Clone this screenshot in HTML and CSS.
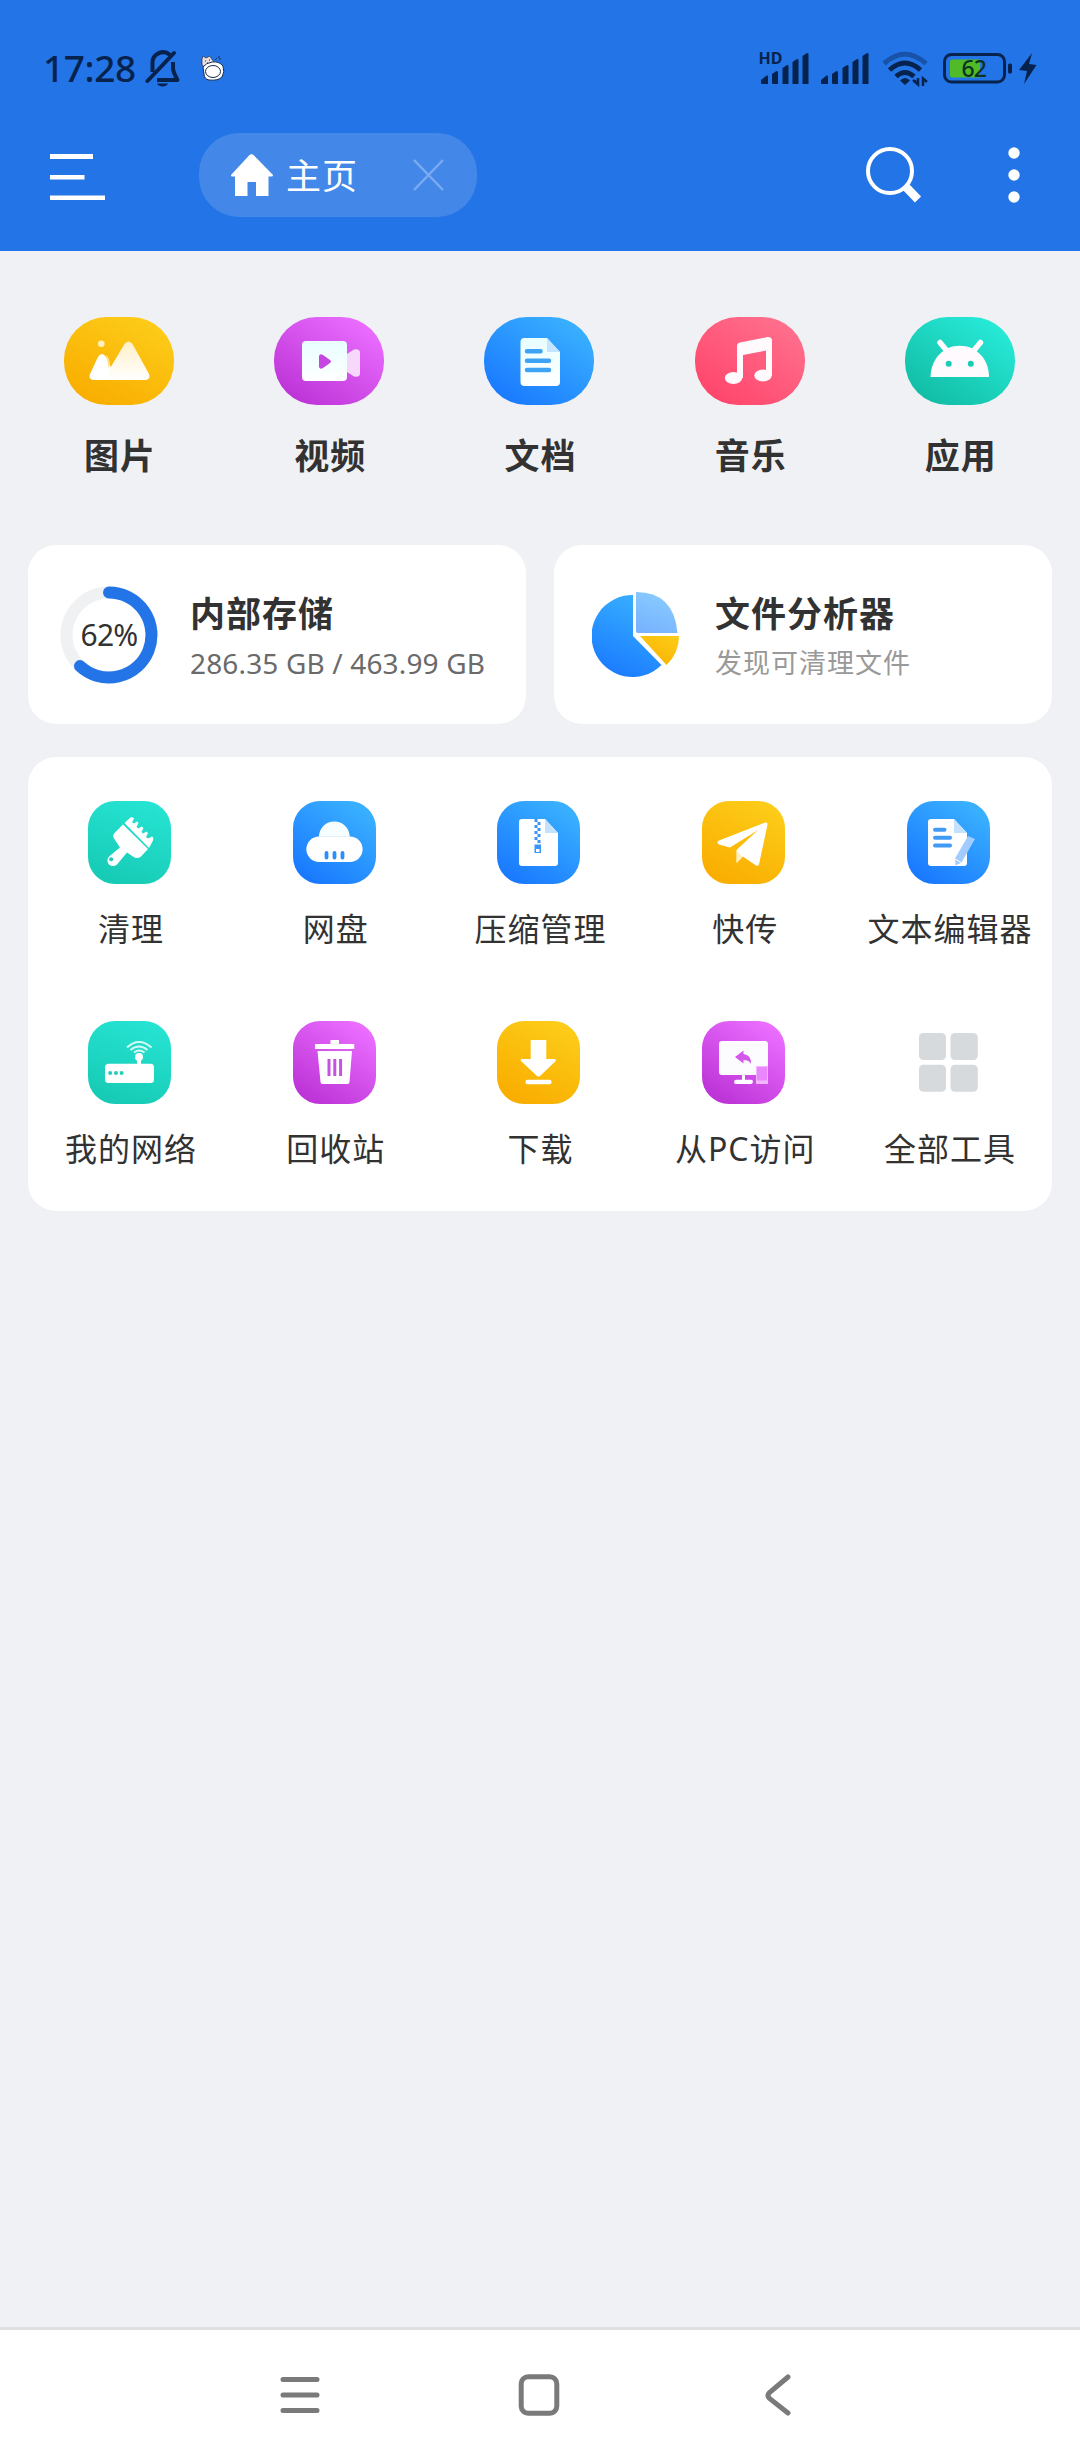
FILE: index.html
```html
<!DOCTYPE html>
<html lang="zh-CN">
<head>
<meta charset="utf-8">
<title>文件管理器</title>
<link rel="stylesheet" href="styles.css">
</head>
<body>
<svg width="0" height="0" class="defs" aria-hidden="true">
  <defs>
    <linearGradient id="peak" x1="0" y1="0" x2="0" y2="1"><stop offset="0" stop-color="#fff0c8"/><stop offset="1" stop-color="#fff"/></linearGradient>
    <linearGradient id="paper" x1="0" y1="0" x2="0" y2="1"><stop offset="0" stop-color="#e8feff"/><stop offset="1" stop-color="#fff"/></linearGradient>
    <linearGradient id="blue" x1=".7" y1="0" x2=".3" y2="1"><stop offset="0" stop-color="#38b0ff"/><stop offset="1" stop-color="#1a7aff"/></linearGradient>
    <linearGradient id="sky" x1=".7" y1="0" x2=".3" y2="1"><stop offset="0" stop-color="#8accff"/><stop offset="1" stop-color="#77b3ff"/></linearGradient>
    <linearGradient id="gold" x1=".8" y1="0" x2=".2" y2="1"><stop offset="0" stop-color="#fccb17"/><stop offset="1" stop-color="#f9b100"/></linearGradient>
  </defs>
</svg>

<header class="top">
  <div class="status">
    <span class="clock">17:28</span>
    <svg class="bell" width="36" height="38" viewBox="0 0 36 38" fill="none" stroke="#07234d" stroke-width="4" stroke-linejoin="round">
      <path d="M7.500 23V14.500A10.500 10.500 0 0 1 25 6"/><path d="M2.500 32 29 4" stroke-linecap="round"/>
      <path d="M28 13v6c0 4 2 7 4.500 12H12"/><path d="M12 34.500h11c-1.500 4-9.500 4-11 0z" fill="#07234d" stroke="none"/>
    </svg>
    <svg class="cat" width="24" height="26" viewBox="0 0 24 26" stroke="#172b4c" stroke-width="1">
      <path d="M1 4 2 1l3 2 4-2 1 2 3 4-2 5-6 1-4-3z" fill="#e9dfe3" stroke-width=".7"/><path d="M4 6h1M8 5h1M6 8h1M14 5l2-2M17 2h2M18 4h2" fill="none"/>
      <path d="M2 12q3-4 9-5 7-1 11 4 2 6-1 11-4 4-13 3-5-1-5-6z" fill="#fff"/><ellipse cx="12" cy="16.500" rx="7.500" ry="6" fill="#fff"/>
    </svg>
    <div class="indicators">
      <svg width="51" height="34" viewBox="0 0 51 34" fill="#07234d">
        <text x="-.5" y="13" class="hd">HD</text>
        <path d="M3 33q-1 0-1-1v-3l5.500-4.500q1.500-.5 1.500 1V33zM14 33q-1 0-1-1V23l4.500-3q1.500 0 1.500 1V33zM23.500 33V17l4.500-3q1.500 0 1.500 1V33zM33.500 33V11l4.500-3q1.500 0 1.500 1V33zM43.500 33V5l4.500-3q1.500 0 1.500 1V33z"/>
      </svg>
      <svg width="49" height="34" viewBox="2 0 49 34" fill="#07234d">
        <path d="M3 33q-1 0-1-1v-3l5.500-4.500q1.500-.5 1.500 1V33zM14 33q-1 0-1-1V23l4.500-3q1.500 0 1.500 1V33zM23.500 33V17l4.500-3q1.500 0 1.500 1V33zM33.500 33V11l4.500-3q1.500 0 1.500 1V33zM43.500 33V5l4.500-3q1.500 0 1.500 1V33z"/>
      </svg>
      <svg class="wifi" width="46" height="36" viewBox="0 0 46 36" fill="none" stroke="#07234d" stroke-width="5">
        <path d="M2 12.500Q23-6 44 12.500" opacity=".4"/><path d="M7.500 19q15.500-14 31 0"/><path d="M14 25.500q9-8 18 0"/>
        <path d="M18 29.500q5-5 10 0L23 34z" fill="#07234d" stroke="none"/><path d="M33 30v-1M31 29l5 4.500V27M45 31l-4-3.500V35" stroke-width="2.500"/>
      </svg>
      <svg width="70" height="32" viewBox="0 0 70 32">
        <rect x="1.500" y="1.500" width="60" height="27.500" rx="7" fill="none" stroke="#07234d" stroke-width="3"/>
        <path d="M9 6.500h28v18H9q-2 0-2-2v-14q0-2 2-2z" fill="#51ba27"/><rect x="65" y="10.500" width="4" height="10" rx="1.500" fill="#07234d"/>
        <text x="18.500" y="24" class="charge">62</text>
      </svg>
      <svg class="bolt" width="18" height="31" viewBox="0 0 18 31" fill="#07234d"><path d="M13 0 0 17l8 1-3 13L17.500 12 10 11z"/></svg>
    </div>
  </div>
  <div class="toolbar">
    <svg class="menu" width="55" height="48" viewBox="0 0 55 48" fill="#fff"><path d="M0 1h43v5H0zM0 22h34.500v4.500H0zM0 42.500h55V47H0z"/></svg>
    <div class="tab">
      <svg width="42" height="42" viewBox="0 0 42 42" fill="#fff"><path d="M18.500 1q2-1.500 4 0L42 21q0 1.500-1.500 1.500H37.500V42H25V28h-8.500v14H4V22.500H1Q0 22.500 0 21z"/></svg>
      <span>主页</span>
      <svg class="close" width="31" height="32" viewBox="0 0 31 32" fill="none" stroke="#7baaf1" stroke-width="2.500"><path d="m1 1 29 30M30 1 1 31"/></svg>
    </div>
    <svg class="search" width="56" height="56" viewBox="0 0 56 56" fill="none" stroke="#fff"><circle cx="24" cy="24" r="22" stroke-width="4"/><path d="m39 39 13 13.500" stroke-width="8.500"/></svg>
    <svg class="more" width="12" height="56" viewBox="0 0 12 56" fill="#fff"><circle cx="6" cy="6" r="5.700"/><circle cx="6" cy="28" r="5.700"/><circle cx="6" cy="50" r="5.700"/></svg>
  </div>
</header>

<main>
  <nav class="categories">
    <a><svg class="gold" viewBox="0 0 110 88"><circle cx="37.300" cy="26.700" r="3.300" fill="#fff0c0"/><path d="M34 40q4-6 8 0l11 23H29q-5-1-3-6z" fill="#fff"/><path d="M46 47q-1-7-4-9l3 14z" fill="#ffe28a"/><path d="M60.500 27q4-5 8 0L85 57q2 5-3 6H45V53z" fill="url(#peak)"/></svg><b>图片</b></a>
    <a><svg class="violet" viewBox="0 0 110 88"><path d="m73 37 7-4.500q6-1 6 3.500v20q0 5-6 3.500L73 55z" fill="#f6d9fa"/><rect x="28" y="24" width="45" height="40" rx="4" fill="url(#paper)"/><path d="M45 39q1-3 4-1l7 5q2 1.500 0 3l-7 5q-3 2-4-1z" fill="#c546e0"/></svg><b>视频</b></a>
    <a><svg class="blue" viewBox="0 0 110 88"><path d="M40.500 21H63l13 14v30q0 4-4 4H40.500q-4 0-4-4V25q0-4 4-4z" fill="url(#paper)"/><path d="M63 21v14h13z" fill="#c4e4ff"/><path d="M43 34.300h13.500M43 43.700h22M43 53h22" stroke="#3ea3f5" stroke-width="4.500" stroke-linecap="round"/></svg><b>文档</b></a>
    <a><svg class="rose" viewBox="0 0 110 88"><g fill="#fffbfd"><ellipse cx="38.500" cy="61" rx="8.700" ry="6"/><ellipse cx="68" cy="58.500" rx="8.700" ry="6"/><path d="M42 62V29q0-3 3-3.500L73 20q4 0 4 3.500V59h-6V33.500L48 38v23z"/></g></svg><b>音乐</b></a>
    <a><svg class="teal" viewBox="0 0 110 88"><path d="M25.500 60C26 42 38 28.700 54.700 28.700S84 42 84 60z" fill="#fffafe"/><path d="m35 25.500 7 8.500M75.500 25.500l-7 8.500" stroke="#fffafe" stroke-width="5.500" stroke-linecap="round"/><circle cx="43.700" cy="46.700" r="3" fill="#1bcbb7"/><circle cx="65.800" cy="46.700" r="3" fill="#1bcbb7"/></svg><b>应用</b></a>
  </nav>

  <section class="cards">
    <article class="card storage">
      <div class="ring">
        <svg width="98" height="98" viewBox="0 0 98 98" fill="none" stroke-width="12"><circle cx="49" cy="49" r="42.500" stroke="#f0f1f3"/><path d="M49 6.500a42.500 42.500 0 1 1-29 73.600" stroke="#2374e6" stroke-linecap="round"/></svg>
        <span>62%</span>
      </div>
      <div><h2>内部存储</h2><p class="size">286.35 GB / 463.99 GB</p></div>
    </article>
    <article class="card analyzer">
      <svg width="88" height="87" viewBox="0 0 88 87"><path d="M41 4v41l28.500 29A41 41 0 1 1 41 4z" fill="url(#blue)"/><path d="M44 1q38 0 41.500 41H46q-2 0-2-2z" fill="url(#sky)"/><path d="M48 45h39q0 17-12.500 29z" fill="url(#gold)"/></svg>
      <div><h2>文件分析器</h2><p>发现可清理文件</p></div>
    </article>
  </section>

  <section class="tools">
    <a><svg class="teal" viewBox="0 0 83 83"><path d="M35 23.500 60 48l-7 7.500q-4 3-8 0l-6-4-10 12q-4 3-8 0-3-4 0-8l11-9-6-9q-2-3 1-6z" fill="#fff"/><path d="m36.500 22 6-5.500q2-1 3.500 1l-2 4 2 1 3-2 1.500 1.500-2 4 2 1.500 3-2 2 1.500-2 4 1.500 1.500 3.500-2 1.500 1.500-2 4 2 1.500 4-2q2 1 1 4L61 47z" fill="#fff"/><circle cx="23.200" cy="58.200" r="2" fill="#19ccb6"/></svg><span>清理</span></a>
    <a><svg class="blue" viewBox="0 0 83 83"><path d="M25.800 37c0-22 31-22 31 0z" fill="#f7feff"/><rect x="13.400" y="35.500" width="56.200" height="25.500" rx="12.700" fill="#fff"/><path d="M26 35.500h30" stroke="#e2f2fa"/><path d="M33.500 52v4.500M41.500 52v4.500M49.500 52v4.500" stroke="#2b8ffb" stroke-width="3.800" stroke-linecap="round"/></svg><span>网盘</span></a>
    <a><svg class="blue" viewBox="0 0 83 83"><path d="M25 18h23l13 14v30q0 3-3 3H25q-3 0-3-3V21q0-3 3-3z" fill="#fff"/><path d="M48 18v14h13z" fill="#c4e2fe"/><path d="M39 18v24" stroke="#3a95f5" stroke-width="3" stroke-dasharray="3 3"/><path d="M42 21v21" stroke="#3a95f5" stroke-width="3" stroke-dasharray="3 3"/><path d="M37.500 43.500h6.500V52h-6.500z" fill="#3a95f5"/><path d="M39 48h3.500v3H39z" fill="#fff"/></svg><span>压缩管理</span></a>
    <a><svg class="gold" viewBox="0 0 83 83"><path d="M63.500 21.500q2.500 0 2 2L57 63.500q-1 2-3 1l-13-9-6.500 6.500V49L56 29 28 46.500l-11-3q-3-2 0-4z" fill="#fff"/><path d="M35 50v11.500l5.500-6z" fill="#ffefbd"/></svg><span>快传</span></a>
    <a><svg class="blue" viewBox="0 0 83 83"><path d="M24 18h23l13 14v30q0 3-3 3H24q-3 0-3-3V21q0-3 3-3z" fill="#fff"/><path d="M47 18v14h13z" fill="#c4e2fe"/><path d="M28 28.700h9.500M28 36.700h15M28 44.500h15" stroke="#409bf6" stroke-width="4" stroke-linecap="round"/><path d="m61 35 7 3-13.500 23.500-6 3-.5-7z" fill="#a2ccff"/><path d="m48 58 6 3.500" stroke="#fff"/></svg><span>文本编辑器</span></a>
    <a><svg class="teal" viewBox="0 0 83 83"><rect x="17" y="42.700" width="49" height="19.300" rx="3.500" fill="#fff"/><circle cx="51" cy="36" r="4" fill="#fff"/><path d="M51 37v8" stroke="#fff" stroke-width="4"/><g fill="#22cdbb"><circle cx="22.200" cy="52" r="2"/><circle cx="28" cy="52" r="2"/><circle cx="33.600" cy="52" r="2"/></g><path d="M39 26.500q12-11 24.500 0M42.500 29q8.500-7 17 0M46 31.500q5-4 10.500 0" fill="none" stroke="#d5faf5" stroke-width="2"/></svg><span>我的网络</span></a>
    <a><svg class="violet" viewBox="0 0 83 83"><path d="M22 23h15.500v-4H46v4h15.300v5H22zM24.500 30H59l-2.500 31q0 2-2 2h-25q-2 0-2-2z" fill="#fff"/><path d="M36 38v17M41.800 38v17M47.600 38v17" stroke="#c453df" stroke-width="3"/></svg><span>回收站</span></a>
    <a><svg class="gold" viewBox="0 0 83 83"><path d="M33.700 19h15.600v19h8q2 0 1.500 2L43 55q-1.500 1-3 0L24 40q-1-2 1-2h8.700z" fill="#fff"/><rect x="28.500" y="58.700" width="26" height="4.500" rx="2" fill="#fff"/></svg><span>下载</span></a>
    <a><svg class="violet" viewBox="0 0 83 83"><path d="M20 20h43q3 0 3 3v31H43v4.700h6q2 0 2 2t-2 2.300H34q-2 0-2-2t2-2.300h6V54H20q-3 0-3-3V23q0-3 3-3z" fill="#fcfcff"/><path d="M54 45h12v18H54z" fill="#f3b5fd"/><path d="M55 46h10v13.500H55z" fill="#ea87ff"/><path d="m33 36 8.500-6.500V33q8 1 7.500 10-2-4-7.500-4v3.500z" fill="#d458ec"/></svg><span>从PC访问</span></a>
    <a><svg class="plain" viewBox="0 0 83 83" fill="#d6dadd"><rect x="12" y="12" width="27" height="27" rx="4.500"/><rect x="43.500" y="12" width="27.300" height="27" rx="4.500"/><rect x="12" y="43.700" width="27" height="27" rx="4.500"/><rect x="43.500" y="43.700" width="27.300" height="27" rx="4.500"/></svg><span>全部工具</span></a>
  </section>
</main>

<footer class="navbar">
  <svg viewBox="0 0 42 42"><path d="M4 5.500h34M4 21h34M4 36.500h34"/></svg>
  <svg viewBox="0 0 42 42"><rect x="3.200" y="2.700" width="35.600" height="36.600" rx="7"/></svg>
  <svg viewBox="0 0 42 42"><path d="m36 3-18.500 15.500q-3 3 0 6L36 39"/></svg>
</footer>
</body>
</html>
```
FILE: styles.css
```css
* { box-sizing: border-box; margin: 0; padding: 0; }
body {
  width: 1080px;
  height: 2460px;
  display: flex;
  flex-direction: column;
  background: #f0f1f4;
  color: #323232;
  font-family: "Noto Sans", "Noto Sans CJK SC", sans-serif;
}
svg { display: block; flex: none; }
.defs { position: absolute; }
h2, p, b, span { white-space: nowrap; }

/* Header */
.top { height: 251px; background: #2374e6; }
.status { height: 133px; padding: 0 43px 0 43px; display: flex; align-items: flex-start; }
.clock { margin-top: 42px; width: 102px; font-size: 37px; line-height: 52px; font-weight: 500; letter-spacing: -.4px; color: #07234d; }
.bell { margin-top: 49px; }
.cat { margin: 55px 0 0 20px; }
.indicators { margin-left: auto; padding-top: 51px; display: flex; align-items: flex-start; }
.indicators svg { overflow: visible; }
.hd { font: 700 16px "Noto Sans", sans-serif; }
.charge { font: 500 23px "Noto Sans", sans-serif; fill: #0b3320; letter-spacing: -1px; }
.indicators svg:nth-child(2) { margin-left: 11px; }
.wifi { margin-left: 12px; }
.indicators svg:nth-child(4) { margin: 2px 6px 0 15px; }
.bolt { margin-top: 2px; }
.toolbar { height: 84px; padding: 0 60px 0 50px; display: flex; align-items: center; }
.menu { margin-top: 4px; }
.tab { width: 278px; height: 84px; margin-left: 94px; padding: 0 33px 0 32px; display: flex; align-items: center; border-radius: 40px; background: #4388e8; color: #fff; font-size: 35px; }
.tab span { margin: 1px auto 0 13px; line-height: 50px; letter-spacing: 1px; }
.search { margin-left: auto; }
.more { margin-left: 86px; }

/* File categories */
main { flex: 1; }
.categories { padding: 66px 16px 0 14px; display: grid; grid-template-columns: repeat(5, 210.2px); height: 294px; }
.categories a, .tools a { display: flex; flex-direction: column; align-items: center; }
.categories svg { width: 110px; height: 88px; border-radius: 43px; }
.categories b { margin: 25px 0 0 2px; font-size: 35px; line-height: 52px; letter-spacing: 1px; }
.gold { background: linear-gradient(207deg, #fdcc19 10%, #f9ae00 88%); }
.violet { background: linear-gradient(214deg, #ea6dff 12%, #bd34d7 88%); }
.blue { background: linear-gradient(214deg, #39b0ff 12%, #1a7aff 88%); }
.rose { background: linear-gradient(214deg, #ff6f8d 12%, #ff466c 88%); }
.teal { background: linear-gradient(214deg, #27ead8 12%, #12bda5 88%); }

/* Summary cards */
.cards { padding: 0 28px; display: grid; grid-template-columns: 1fr 1fr; gap: 28px; }
.card { height: 179px; display: flex; align-items: center; border-radius: 28px; background: #fff; }
.card h2 { margin-top: 2px; font-size: 35px; line-height: 50px; letter-spacing: 1px; }
.card p { margin-top: 4px; font-size: 27px; line-height: 40px; letter-spacing: 1px; color: #999; }
.storage { padding-left: 32px; }
.ring { width: 98px; display: grid; place-items: center; margin-right: 32px; }
.ring > * { grid-area: 1 / 1; }
.ring span { font-size: 30px; letter-spacing: -.7px; }
.card .size { color: #6a6a6a; font-size: 28px; letter-spacing: .15px; }
.analyzer { padding-left: 38px; gap: 35px; }

/* Tools */
.tools { margin: 33px 28px 0; height: 454px; padding-top: 44px; display: grid; grid-template-columns: repeat(5, 1fr); grid-auto-rows: 220px; border-radius: 28px; background: #fff; overflow: hidden; }
.tools svg { width: 83px; height: 83px; border-radius: 27px; margin-right: 2px; }
.tools .teal { background: linear-gradient(200deg, #27e6d5, #15c8b2); }
.tools span { margin: 22px 0 0 1px; font-size: 32px; line-height: 46px; letter-spacing: 1px; }

/* System navigation */
.navbar { height: 133px; padding: 0 286px 0 279px; border-top: 3px solid #dfe0e2; background: #fff; display: flex; align-items: center; justify-content: space-between; }
.navbar svg { width: 42px; height: 42px; fill: none; stroke: #7a7a7a; stroke-width: 5; stroke-linecap: round; }
.navbar svg:nth-child(2) { margin-left: 5px; }
```
